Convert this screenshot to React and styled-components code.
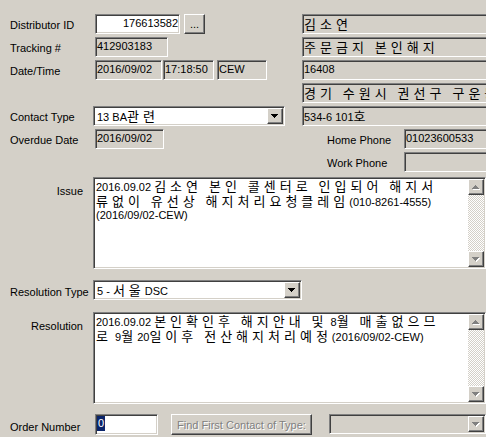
import React from 'react';
import styled, { createGlobalStyle } from 'styled-components';

const GlobalStyle = createGlobalStyle`
  html, body { margin: 0; padding: 0; background: #d4d0c8; overflow: hidden; }
  body {
    font-family: "Liberation Sans", Arial, "Noto Sans CJK KR", sans-serif;
    font-size: 11px;
    color: #000;
  }
`;

const Form = styled.div`
  width: 560px;
  height: 437px;
  box-sizing: border-box;
  padding-top: 14px;
  display: flex;
  flex-direction: column;
`;

const Top = styled.div`
  display: flex;
`;

const Column = styled.div`
  width: ${(p) => p.$w}px;
  flex-shrink: 0;
  display: flex;
  flex-direction: column;
  gap: 3px;
`;

const Row = styled.div`
  display: flex;
  align-items: flex-start;
  height: ${(p) => p.$h ?? 20}px;
  margin-top: ${(p) => p.$mt ?? 0}px;
`;

const Label = styled.div`
  box-sizing: border-box;
  width: ${(p) => p.$w ?? 95}px;
  flex-shrink: 0;
  padding-left: ${(p) => p.$pl ?? 10}px;
  padding-top: ${(p) => p.$pt ?? 1}px;
  line-height: 20px;
  white-space: nowrap;
`;

const sunken = `
  border: 1px solid;
  border-color: #808080 #ffffff #ffffff #808080;
  box-shadow: inset 1px 1px #404040, inset -1px -1px #d4d0c8;
`;

const raised = `
  border: 1px solid;
  border-color: #ffffff #404040 #404040 #ffffff;
  box-shadow: inset -1px -1px #808080, inset 1px 1px #d4d0c8;
  background: #d4d0c8;
`;

const Field = styled.div`
  box-sizing: border-box;
  flex-shrink: 0;
  width: ${(p) => p.$w}px;
  height: ${(p) => p.$h ?? 20}px;
  margin-left: ${(p) => p.$ml ?? 0}px;
  background: ${(p) => (p.$white ? '#ffffff' : '#d4d0c8')};
  ${sunken}
  padding: 0 1px 0 ${(p) => p.$pl ?? 1}px;
  line-height: 17px;
  white-space: nowrap;
  text-align: ${(p) => (p.$right ? 'right' : 'left')};
`;

const PushButton = styled.div`
  box-sizing: border-box;
  flex-shrink: 0;
  width: ${(p) => p.$w}px;
  height: ${(p) => p.$h ?? 20}px;
  margin-left: ${(p) => p.$ml ?? 0}px;
  ${raised}
  display: flex;
  align-items: center;
  justify-content: center;
  white-space: nowrap;
  color: ${(p) => (p.$disabled ? '#808080' : '#000')};
  text-shadow: ${(p) => (p.$disabled ? '1px 1px #ffffff' : 'none')};
`;

const Combo = styled.div`
  box-sizing: border-box;
  flex-shrink: 0;
  width: ${(p) => p.$w}px;
  height: ${(p) => p.$h ?? 20}px;
  margin-left: ${(p) => p.$ml ?? 0}px;
  background: ${(p) => (p.$disabled ? '#d4d0c8' : '#ffffff')};
  ${sunken}
  padding: 1px;
  display: flex;
`;

const ComboText = styled.div`
  flex: 1;
  padding-left: 2px;
  line-height: 16px;
  white-space: nowrap;
`;

const ArrowButton = styled.div`
  box-sizing: border-box;
  width: 16px;
  height: 16px;
  flex-shrink: 0;
  ${raised}
  display: flex;
  align-items: center;
  justify-content: center;
`;

const Memo = styled.div`
  box-sizing: border-box;
  width: ${(p) => p.$w}px;
  height: 92px;
  background: #ffffff;
  ${sunken}
  padding: 1px;
  display: flex;
`;

const MemoText = styled.div`
  flex: 1;
  padding: 0 0 0 1px;
  line-height: 13px;
  white-space: nowrap;
`;

const MemoLabel = styled.div`
  box-sizing: border-box;
  width: 93px;
  flex-shrink: 0;
  text-align: right;
  padding-right: 10px;
  padding-top: 8px;
  line-height: 13px;
`;

const MemoRow = styled.div`
  display: flex;
  margin-top: ${(p) => p.$mt}px;
`;

const ScrollBar = styled.div`
  width: 16px;
  flex-shrink: 0;
  display: flex;
  flex-direction: column;
  background-color: #ffffff;
  background-image: repeating-conic-gradient(#d4d0c8 0 25%, #ffffff 0 50%);
  background-size: 2px 2px;
`;

const Track = styled.div`
  flex: 1;
`;

const Hangul = styled.span`
  font-family: "Noto Sans CJK KR", sans-serif;
  font-size: 13px;
  letter-spacing: 4px;
`;

const Selected = styled.span`
  display: inline-block;
  background: #0a246a;
  color: #ffffff;
  line-height: 15px;
  padding: 0 1px;
  margin-top: 1px;
`;

const HANGUL_RUN = /([\uAC00-\uD7A3\u3131-\u318E]+(?:\s+[\uAC00-\uD7A3\u3131-\u318E]+)*)/;

function Mixed({ text }) {
  const parts = text.split(HANGUL_RUN);
  return (
    <>
      {parts.map((part, i) =>
        i % 2 === 1 ? <Hangul key={i}>{part}</Hangul> : <React.Fragment key={i}>{part}</React.Fragment>
      )}
    </>
  );
}

function Arrow({ dir = 'down', color = '#000' }) {
  const d =
    dir === 'down'
      ? 'M0 0h7v1H0zM1 1h5v1H1zM2 2h3v1H2zM3 3h1v1H3z'
      : 'M3 0h1v1H3zM2 1h3v1H2zM1 2h5v1H1zM0 3h7v1H0z';
  return (
    <svg width="8" height="5" viewBox="0 0 8 5" shapeRendering="crispEdges">
      {color === '#808080' && <path d={d} fill="#ffffff" transform="translate(1 1)" />}
      <path d={d} fill={color} />
    </svg>
  );
}

function Dropdown({ w, ml, disabled, children }) {
  return (
    <Combo $w={w} $ml={ml} $disabled={disabled}>
      <ComboText>{children}</ComboText>
      <ArrowButton>
        <Arrow color={disabled ? '#808080' : '#000'} />
      </ArrowButton>
    </Combo>
  );
}

function MemoBox({ lines }) {
  return (
    <Memo $w={393}>
      <MemoText>
        {lines.map((l, i) => (
          <div key={i}>
            <Mixed text={l} />
          </div>
        ))}
      </MemoText>
      <ScrollBar>
        <ArrowButton>
          <Arrow dir="up" color="#808080" />
        </ArrowButton>
        <Track />
        <ArrowButton>
          <Arrow color="#808080" />
        </ArrowButton>
      </ScrollBar>
    </Memo>
  );
}

export default function App() {
  return (
    <>
      <GlobalStyle />
      <Form>
        <Top>
          <Column $w={302}>
            <Row>
              <Label>Distributor ID</Label>
              <Field $w={85} $white $right>176613582</Field>
              <PushButton $w={21} $ml={4}>...</PushButton>
            </Row>
            <Row>
              <Label>Tracking #</Label>
              <Field $w={73}>412903183</Field>
            </Row>
            <Row>
              <Label>Date/Time</Label>
              <Field $w={67}>2016/09/02</Field>
              <Field $w={51} $ml={1}>17:18:50</Field>
              <Field $w={50} $ml={3}>CEW</Field>
            </Row>
            <Row />
            <Row>
              <Label $w={93}>Contact Type</Label>
              <Dropdown w={192}>
                <Mixed text="13 BA관련" />
              </Dropdown>
            </Row>
            <Row>
              <Label>Overdue Date</Label>
              <Field $w={69}>2016/09/02</Field>
            </Row>
          </Column>
          <Column $w={258}>
            <Row>
              <Field $w={258}><Mixed text="김소연" /></Field>
            </Row>
            <Row>
              <Field $w={258}><Mixed text="주문금지 본인해지" /></Field>
            </Row>
            <Row>
              <Field $w={258}>16408</Field>
            </Row>
            <Row>
              <Field $w={258}><Mixed text="경기 수원시 권선구 구운동" /></Field>
            </Row>
            <Row>
              <Field $w={258}><Mixed text="534-6 101호" /></Field>
            </Row>
            <Row>
              <Label $w={102} $pl={25}>Home Phone</Label>
              <Field $w={156}>01023600533</Field>
            </Row>
            <Row>
              <Label $w={102} $pl={25}>Work Phone</Label>
              <Field $w={156} />
            </Row>
          </Column>
        </Top>

        <MemoRow $mt={5}>
          <MemoLabel>Issue</MemoLabel>
          <MemoBox
            lines={[
              '2016.09.02 김소연 본인 콜센터로 인입되어 해지서',
              '류없이 유선상 해지처리요청클레임(010-8261-4555)',
              '(2016/09/02-CEW)',
            ]}
          />
        </MemoRow>

        <Row $mt={11}>
          <Label $w={93} $pt={2}>Resolution Type</Label>
          <Dropdown w={209}>
            <Mixed text="5 - 서울DSC" />
          </Dropdown>
        </Row>

        <MemoRow $mt={12}>
          <MemoLabel>Resolution</MemoLabel>
          <MemoBox
            lines={[
              '2016.09.02 본인확인후 해지안내 및 8월 매출없으므',
              '로 9월20일이후 전산해지처리예정(2016/09/02-CEW)',
            ]}
          />
        </MemoRow>

        <Row $mt={10} $h={21}>
          <Label $pt={3}>Order Number</Label>
          <Field $w={63} $h={21} $white>
            <Selected>0</Selected>
          </Field>
          <PushButton $w={141} $h={21} $ml={13} $disabled>
            Find First Contact of Type:
          </PushButton>
          <Dropdown w={157} ml={17} disabled />
        </Row>
      </Form>
    </>
  );
}
